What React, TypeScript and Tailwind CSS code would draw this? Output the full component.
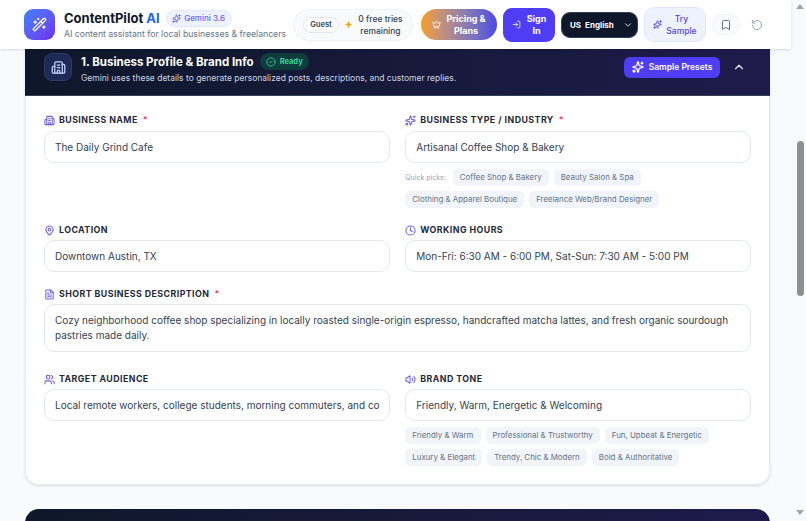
import {
  Bookmark,
  Building2,
  ChevronDown,
  ChevronUp,
  CircleCheck,
  Clock,
  Crown,
  FileText,
  LogIn,
  MapPin,
  RotateCcw,
  Sparkle,
  Sparkles,
  Users,
  Volume2,
  WandSparkles,
} from "lucide-react";
import type { ReactNode } from "react";

function Label({ icon, text, required }: { icon: ReactNode; text: string; required?: boolean }) {
  return (
    <div className="flex items-center gap-[4px] h-[12px] mb-[4px] text-[8.8px] leading-none font-bold tracking-[0.45px] uppercase text-[#1e293b]">
      <span className="text-[#6d5df6]">{icon}</span>
      <span>{text}</span>
      {required && <span className="ml-[1px] text-[#f43f5e]">*</span>}
    </div>
  );
}

function Input({ value }: { value: string }) {
  return (
    <div className="h-[32px] px-[10px] flex items-center bg-white border border-[#e2e8f0] rounded-[10px] text-[10px] text-[#334155] whitespace-nowrap overflow-hidden">
      {value}
    </div>
  );
}

function Chip({ children }: { children: string }) {
  return (
    <span className="h-[17px] px-[7px] flex items-center rounded-[5px] bg-[#f1f5f9] text-[7.9px] text-[#64748b] whitespace-nowrap">
      {children}
    </span>
  );
}

export default function App() {
  return (
    <div className="h-[521px] w-[806px] flex overflow-hidden bg-[#f8fafc] font-['Inter',sans-serif]">
      <div className="w-[791px] flex flex-col">
        {/* Top bar */}
        <header className="h-[49px] shrink-0 flex items-center pl-[24px] bg-white shadow-sm relative z-10">
          <div className="w-[31px] h-[31px] rounded-[9px] bg-gradient-to-br from-[#3b82f6] to-[#6d28f0] flex items-center justify-center text-white">
            <WandSparkles size={15} />
          </div>
          <div className="ml-[9px] w-[229px]">
            <div className="flex items-center gap-[6px] h-[18px]">
              <span className="text-[13px] leading-[18px] font-bold text-[#0f172a]">
                ContentPilot <span className="text-[#2563eb]">AI</span>
              </span>
              <span className="h-[17px] w-[66px] flex items-center justify-center gap-[3px] rounded-full bg-[#eef2ff] border border-[#e0e7ff] text-[8px] font-medium text-[#6d5df6]">
                <Sparkles size={9} strokeWidth={2.5} />
                Gemini 3.6
              </span>
            </div>
            <div className="mt-[1px] text-[8.7px] leading-[12px] text-[#64748b] whitespace-nowrap">
              AI content assistant for local businesses &amp; freelancers
            </div>
          </div>

          <div className="w-[120px] h-[32px] flex items-center pl-[9px] rounded-full bg-[#f8fafc] border border-[#eef1f5]">
            <span className="h-[16px] w-[36px] flex items-center justify-center rounded-full bg-white border border-[#e2e8f0] text-[7.5px] font-bold text-[#475569]">
              Guest
            </span>
            <Sparkle size={7} className="ml-[6px] text-[#f59e0b] fill-[#f59e0b]" />
            <span className="ml-[5px] flex-1 pr-[8px] text-center text-[8.5px] leading-[12px] font-medium text-[#334155]">
              0 free tries
              <br />
              remaining
            </span>
          </div>

          <div className="ml-[8px] w-[76px] h-[31px] flex items-center justify-center gap-[5px] rounded-full bg-gradient-to-r from-[#f59e0b] to-[#4f46e5] text-white text-[9px] leading-[12px] font-bold text-center">
            <Crown size={9} className="shrink-0" />
            <span>
              Pricing &amp;
              <br />
              Plans
            </span>
          </div>

          <div className="ml-[6px] w-[52px] h-[34px] flex items-center justify-center gap-[6px] rounded-[9px] bg-[#4f3df5] text-white text-[9px] leading-[12px] font-bold text-center">
            <LogIn size={9} className="shrink-0" />
            <span>
              Sign
              <br />
              In
            </span>
          </div>

          <div className="ml-[6px] w-[77px] h-[26px] flex items-center pl-[8px] gap-[4px] rounded-[9px] bg-[#0f172a] border border-[#334155] text-white text-[8px] leading-none font-bold">
            <span>US</span>
            <span>English</span>
            <ChevronDown size={10} className="ml-[5px]" />
          </div>

          <div className="ml-[6px] w-[62px] h-[35px] flex items-center justify-center gap-[4px] rounded-[10px] bg-[#eef2ff] border border-[#e0e7ff] text-[#4f46e5] text-[8.5px] leading-[12px] font-medium text-center">
            <Sparkles size={9} strokeWidth={2.5} className="shrink-0" />
            <span>
              Try
              <br />
              Sample
            </span>
          </div>

          <div className="ml-[6px] w-[28px] h-[21px] flex items-center justify-center rounded-[9px] bg-[#f8fafc] border border-[#f1f5f9] text-[#64748b]">
            <Bookmark size={12} />
          </div>

          <RotateCcw size={12} className="ml-[11px] text-[#94a3b8]" />
        </header>

        <main className="flex-1 pl-[25px] pr-[21px] min-h-0">
          {/* Profile card */}
          <section className="rounded-b-[14px] shadow-sm">
            <div className="h-[47px] pb-[10px] flex items-center pl-[19px] pr-[24px] bg-gradient-to-r from-[#0f172a] to-[#1e1b4b] text-white border-b border-[#334155]">
              <div className="w-[28px] h-[28px] rounded-[8px] bg-[#1e2a55] border border-[#2e3a66] flex items-center justify-center text-[#c7d2fe]">
                <Building2 size={15} />
              </div>
              <div className="ml-[9px] flex-1 mt-[4px]">
                <div className="flex items-center gap-[6px] h-[16px]">
                  <span className="text-[11.5px] font-bold leading-[16px]">1. Business Profile &amp; Brand Info</span>
                  <span className="h-[17px] w-[49px] flex items-center justify-center gap-[4px] rounded-full bg-[#0f3d3d] text-[7.5px] font-bold text-[#34d399]">
                    <CircleCheck size={10} />
                    Ready
                  </span>
                </div>
                <div className="mt-[2px] text-[8.5px] leading-[13px] text-[#cbd5e1] whitespace-nowrap">
                  Gemini uses these details to generate personalized posts, descriptions, and customer replies.
                </div>
              </div>
              <div className="w-[96px] h-[21px] flex items-center justify-center gap-[5px] rounded-[6px] bg-[#4f3df5] text-[8.5px] font-semibold">
                <Sparkles size={12} strokeWidth={2.5} />
                Sample Presets
              </div>
              <ChevronUp size={14} className="ml-[12px] text-[#e2e8f0]" />
            </div>

            <div className="pt-[18px] px-[18px] pb-[18px] grid grid-cols-2 gap-x-[15.5px] gap-y-[16px] bg-white rounded-b-[14px] border-x border-b border-[#e8ecf2]">
              <div>
                <div className="pb-[1px]">
                  <Label icon={<Building2 size={11} strokeWidth={2.25} />} text="Business Name" required />
                </div>
                <Input value="The Daily Grind Cafe" />
              </div>
              <div>
                <div className="pb-[1px]">
                  <Label icon={<Sparkles size={11} strokeWidth={2.25} />} text="Business Type / Industry" required />
                </div>
                <Input value="Artisanal Coffee Shop & Bakery" />
                <div className="mt-[6px] flex flex-wrap items-center gap-x-[5px] gap-y-[5px]">
                  <span className="pt-[2px] text-[7px] text-[#94a3b8] mr-[2px]">Quick picks:</span>
                  <Chip>Coffee Shop &amp; Bakery</Chip>
                  <Chip>Beauty Salon &amp; Spa</Chip>
                  <Chip>Clothing &amp; Apparel Boutique</Chip>
                  <Chip>Freelance Web/Brand Designer</Chip>
                </div>
              </div>
              <div>
                <Label icon={<MapPin size={11} strokeWidth={2.25} />} text="Location" />
                <Input value="Downtown Austin, TX" />
              </div>
              <div>
                <Label icon={<Clock size={11} strokeWidth={2.25} />} text="Working Hours" />
                <Input value="Mon-Fri: 6:30 AM - 6:00 PM, Sat-Sun: 7:30 AM - 5:00 PM" />
              </div>
              <div className="col-span-2 pb-[5px]">
                <Label icon={<FileText size={11} strokeWidth={2.25} />} text="Short Business Description" required />
                <div className="h-[48px] px-[10px] pt-[8px] bg-white border border-[#e2e8f0] rounded-[10px] text-[10px] leading-[15px] text-[#334155]">
                  Cozy neighborhood coffee shop specializing in locally roasted single-origin espresso, handcrafted matcha lattes, and fresh organic sourdough pastries made daily.
                </div>
              </div>
              <div>
                <Label icon={<Users size={11} strokeWidth={2.25} />} text="Target Audience" />
                <Input value="Local remote workers, college students, morning commuters, and co" />
              </div>
              <div>
                <Label icon={<Volume2 size={11} strokeWidth={2.25} />} text="Brand Tone" />
                <Input value="Friendly, Warm, Energetic & Welcoming" />
                <div className="mt-[6px] flex flex-wrap gap-x-[5px] gap-y-[5px]">
                  <Chip>Friendly &amp; Warm</Chip>
                  <Chip>Professional &amp; Trustworthy</Chip>
                  <Chip>Fun, Upbeat &amp; Energetic</Chip>
                  <Chip>Luxury &amp; Elegant</Chip>
                  <Chip>Trendy, Chic &amp; Modern</Chip>
                  <Chip>Bold &amp; Authoritative</Chip>
                </div>
              </div>
            </div>
          </section>

          {/* Next card, cut off by the fold */}
          <div className="mt-[24px] h-[40px] rounded-t-[14px] bg-gradient-to-r from-[#0f172a] to-[#1e1b4b]" />
        </main>
      </div>

      {/* Scrollbar */}
      <div className="w-[15px] shrink-0 bg-[#f8f9fa] flex flex-col items-center pl-[3px] pt-[4px] pb-[6px]">
        <div className="w-0 h-0 border-x-[4px] border-x-transparent border-b-[5px] border-b-[#a3a3a3]" />
        <div className="mt-[132px] w-[7px] h-[155px] rounded-full bg-[#8f8f8f]" />
        <div className="mt-auto w-0 h-0 border-x-[4px] border-x-transparent border-t-[5px] border-t-[#a3a3a3]" />
      </div>
    </div>
  );
}
